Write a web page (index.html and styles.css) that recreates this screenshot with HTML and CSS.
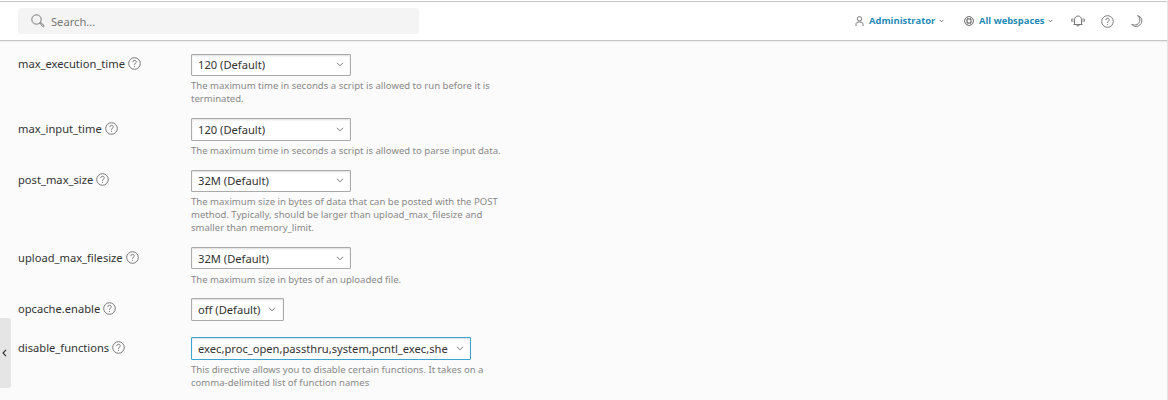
FILE: index.html
```html
<!DOCTYPE html>
<html lang="en">
<head>
<meta charset="utf-8">
<title>PHP Settings</title>
<link rel="stylesheet" href="styles.css">
</head>
<body>
<svg class="defs" width="0" height="0">
  <symbol id="help" viewBox="0 0 13 13"><circle cx="6.5" cy="6.5" r="5.8"/><path d="M4.8 5.1c0-2.4 3.5-2.3 3.5-.2 0 1.300-1.800 1.300-1.800 2.900M6.500 8.900v1"/></symbol>
  <symbol id="chev" viewBox="0 0 8 5"><path d="M1 .8l3 3 3-3"/></symbol>
</svg>
<div class="app">
  <header class="topbar">
    <div class="search">
      <svg class="icon" width="14" height="14" viewBox="0 0 14 14"><circle cx="5.500" cy="5.500" r="4.700"/><path d="M8.800 9l.8-.7 3.400 3.200c.5.700-.5 1.700-1.200 1.200L8.800 9z"/></svg>
      <span>Search...</span>
    </div>
    <nav class="tools">
      <a class="menu admin">
        <svg class="icon" width="9" height="10" viewBox="0 0 9 10"><circle cx="4.500" cy="2.800" r="2.200"/><path d="M1 10V8.300C1 6.500 2.200 6 4.500 6S8 6.500 8 8.300V10"/></svg>
        <span class="name">Administrator</span><svg class="icon" width="5" height="4" viewBox="0 0 8 5"><path d="M1 .8l3 3 3-3" stroke-width="1.400"/></svg>
      </a>
      <a class="menu spaces">
        <svg class="icon" width="10" height="10" viewBox="0 0 10 10"><circle cx="5" cy="5" r="4.500"/><circle cx="5" cy="5" r="2.300"/><path d="M1 3.200h8M1 6.800h8M3.500 1v8M6.500 1v8" stroke-width=".6"/></svg>
        <span class="name">All webspaces</span><svg class="icon" width="5" height="4" viewBox="0 0 8 5"><path d="M1 .8l3 3 3-3" stroke-width="1.400"/></svg>
      </a>
      <svg class="icon bell" width="14" height="12" viewBox="0 0 14 12"><path d="M2.500 9.500h9M3.500 9.500V5C3.500 2.500 5 1 7 1s3.500 1.500 3.500 4v4.500M5.800 10c.2 1.600 2.200 1.600 2.400 0"/><path stroke-width=".8" d="M1.900 3.200v4M.6 3.800v3M12.100 3.200v4M13.400 3.800v3"/></svg>
      <svg class="icon question" width="13" height="13"><use href="#help"/></svg>
      <svg class="icon moon" width="12" height="12" viewBox="0 0 12 12"><path d="M6.500.7c3.300 1.700 3.100 7.200-.5 8.800-1.800.9-3.800.7-5.300-.2 1.900 2.700 5.900 2.800 8.300.6C12.400 6.700 10.800 1.500 6.500.7z"/></svg>
    </nav>
  </header>
  <main class="form">
    <div class="row">
      <label class="label"><span>max_execution_time</span><svg class="icon" width="13" height="13"><use href="#help"/></svg></label>
      <div class="field"><div class="select raised"><span>120 (Default)</span><svg class="icon" width="8" height="5"><use href="#chev"/></svg></div>
      <p class="hint">The maximum time in seconds a script is allowed to run before it is<br>terminated.</p></div>
    </div>
    <div class="row">
      <label class="label"><span>max_input_time</span><svg class="icon" width="13" height="13"><use href="#help"/></svg></label>
      <div class="field"><div class="select tall"><span>120 (Default)</span><svg class="icon" width="8" height="5"><use href="#chev"/></svg></div>
      <p class="hint">The maximum time in seconds a script is allowed to parse input data.</p></div>
    </div>
    <div class="row">
      <label class="label"><span>post_max_size</span><svg class="icon" width="13" height="13"><use href="#help"/></svg></label>
      <div class="field"><div class="select raised"><span>32M (Default)</span><svg class="icon" width="8" height="5"><use href="#chev"/></svg></div>
      <p class="hint">The maximum size in bytes of data that can be posted with the POST<br>method. Typically, should be larger than upload_max_filesize and<br>smaller than memory_limit.</p></div>
    </div>
    <div class="row">
      <label class="label"><span>upload_max_filesize</span><svg class="icon" width="13" height="13"><use href="#help"/></svg></label>
      <div class="field"><div class="select"><span>32M (Default)</span><svg class="icon" width="8" height="5"><use href="#chev"/></svg></div>
      <p class="hint">The maximum size in bytes of an uploaded file.</p></div>
    </div>
    <div class="row">
      <label class="label"><span>opcache.enable</span><svg class="icon" width="13" height="13"><use href="#help"/></svg></label>
      <div class="field"><div class="select short"><span>off (Default)</span><svg class="icon" width="8" height="5"><use href="#chev"/></svg></div></div>
    </div>
    <div class="row">
      <label class="label"><span>disable_functions</span><svg class="icon" width="13" height="13"><use href="#help"/></svg></label>
      <div class="field"><div class="select wide"><span>exec,proc_open,passthru,system,pcntl_exec,she</span><svg class="icon" width="8" height="5"><use href="#chev"/></svg></div>
      <p class="hint">This directive allows you to disable certain functions. It takes on a<br>comma-delimited list of function names</p></div>
    </div>
  </main>
  <button class="collapse" aria-label="Collapse"><svg width="5" height="8" viewBox="0 0 5 8"><path d="M4 .8L1 4l3 3.200"/></svg></button>
</div>
</body>
</html>
```
FILE: styles.css
```css
* { box-sizing: border-box; }
body { margin: 0; background: #fbfbfb; font-family: "Noto Sans", "Open Sans", sans-serif; font-size: 11.16px; color: #333; }
.defs { display: block; }
.app { position: relative; width: 1168px; height: 400px; overflow: hidden; border-top: 1px solid #fff; border-right: 1px solid #e5e5e5; }
.icon { fill: none; stroke: #777; stroke-width: 1; flex: none; }
.topbar { display: flex; justify-content: space-between; height: 40px; padding: 6px 24px 0 18px; background: #fff; border-top: 1px solid #c8c8c8; border-bottom: 1px solid #c4c4c4; box-shadow: 0 1px 1px #eee; }
.search { display: flex; align-items: center; gap: 6px; width: 401px; height: 26px; padding: 1px 0 0 13px; border-radius: 3px; background: #f4f4f4; color: #777; }
.search .icon { margin-top: -2px; }
.tools { display: flex; align-items: center; height: 26px; }
.menu { display: flex; align-items: center; margin-top: -1px; }
.name { color: #1e8ab5; font-family: "Open Sans", sans-serif; font-weight: 700; font-size: 9.4px; white-space: nowrap; }
.admin .name { width: 65px; margin: 0 5px 0 5px; }
.spaces { margin-left: 20px; }
.spaces .name { width: 65px; margin: 0 4px 0 5px; }
.bell { margin-left: 18px; }
.question { margin-left: 16px; }
.moon { margin-left: 17px; }
.form { display: grid; grid-template-rows: 64px 52px 77px 51px 39px 60px; padding: 13px 0 0 18px; }
.row { display: grid; grid-template-columns: 173px 330px; }
.label { display: flex; align-items: center; gap: 3px; height: 20px; }
.row:first-child .label, .row:nth-child(3) .label { height: 19px; }
.select { display: flex; align-items: center; justify-content: space-between; width: 160px; height: 22px; padding: 0 6px; border: 1px solid #aaa; border-radius: 1px; background: #fff; box-shadow: inset 0 1px 2px #ddd; white-space: nowrap; }
.raised { padding-bottom: 1px; }
.tall { height: 23px; }
.short { width: 93px; height: 23px; padding-right: 7px; }
.wide { width: 280px; height: 23px; border-color: #3ba3d0; }
.hint { margin: 3px 0 0; color: #888; font-size: 9.55px; line-height: 13px; white-space: nowrap; }
.row:nth-child(4) .hint { margin-top: 4px; }
.collapse { position: absolute; left: 0; top: 317px; width: 11px; height: 70px; padding: 0 0 0 2px; border: 0; border-radius: 0 3px 3px 0; background: #e5e5e5; display: flex; align-items: center; }
.collapse svg { fill: none; stroke: #333; stroke-width: 1.200; }
```
